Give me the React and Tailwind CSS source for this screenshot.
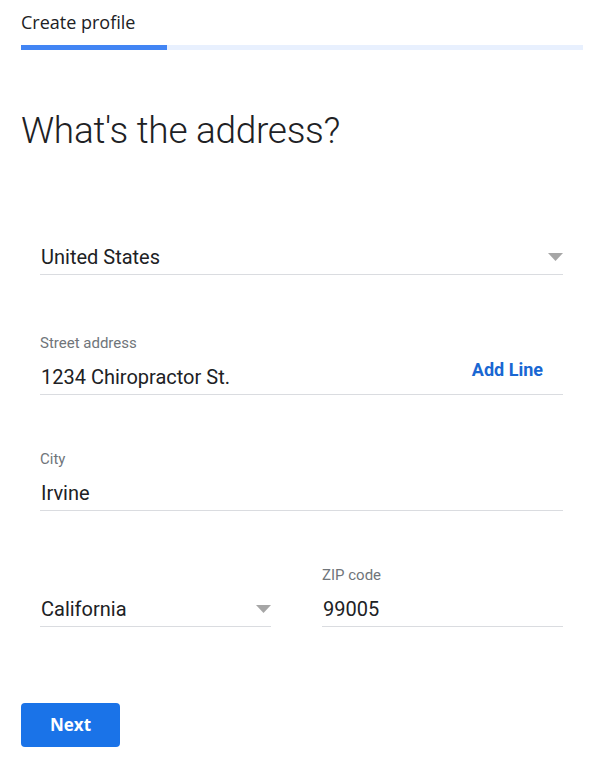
import React from "react";

const Caret = () => (
  <svg width="15" height="8" viewBox="0 0 15 8" className="shrink-0">
    <path d="M0 0 L15 0 L7.5 8 Z" fill="#a6a6a6" />
  </svg>
);

const Field = ({ label, value, right, className = "" }) => (
  <div className={className}>
    {label && (
      <div className="text-[15px] leading-[18px] text-[#70757a]">{label}</div>
    )}
    <div
      className={`flex h-[35px] items-center justify-between border-b border-[#dadce0] pl-[1px] ${
        label ? "mt-[8px]" : ""
      }`}
    >
      <span className="text-[20px] text-[#202124]">{value}</span>
      {right}
    </div>
  </div>
);

export default function App() {
  return (
    <div
      className="min-h-[766px] bg-white pl-[21px] pr-[18px] pt-[10px]"
      style={{ fontFamily: "Roboto, Arial, sans-serif" }}
    >
      <div className="h-6 text-[18px] leading-6 text-[#202124] [font-family:'Open_Sans',sans-serif]">
        Create profile
      </div>
      <div className="mt-[11px] h-[5px] bg-[#e8f0fe]">
        <div className="h-full w-[146px] bg-[#4285f4]" />
      </div>

      <h1 className="mt-[58px] text-[37px] leading-[46px] font-light tracking-[-0.3px] text-[#202124]">
        What's the address?
      </h1>

      <div className="pl-[19px] pr-[20px]">
        <Field
          className="mt-[86px]"
          value="United States"
          right={<Caret />}
        />

        <Field
          className="mt-[59px]"
          label="Street address"
          value="1234 Chiropractor St."
          right={
            <button className="mr-[20px] -mt-[16px] text-[18px] font-bold text-[#1967d2]">
              Add Line
            </button>
          }
        />

        <Field className="mt-[55px]" label="City" value="Irvine" />

        <div className="mt-[55px] flex items-end">
          <Field className="w-[231px]" value="California" right={<Caret />} />
          <Field className="ml-[51px] flex-1" label="ZIP code" value="99005" />
        </div>
      </div>

      <button className="mt-[76px] h-[44px] w-[99px] rounded-[4px] bg-[#1a73e8] text-[17px] font-bold text-white [font-family:'Open_Sans',sans-serif]">
        Next
      </button>
    </div>
  );
}
